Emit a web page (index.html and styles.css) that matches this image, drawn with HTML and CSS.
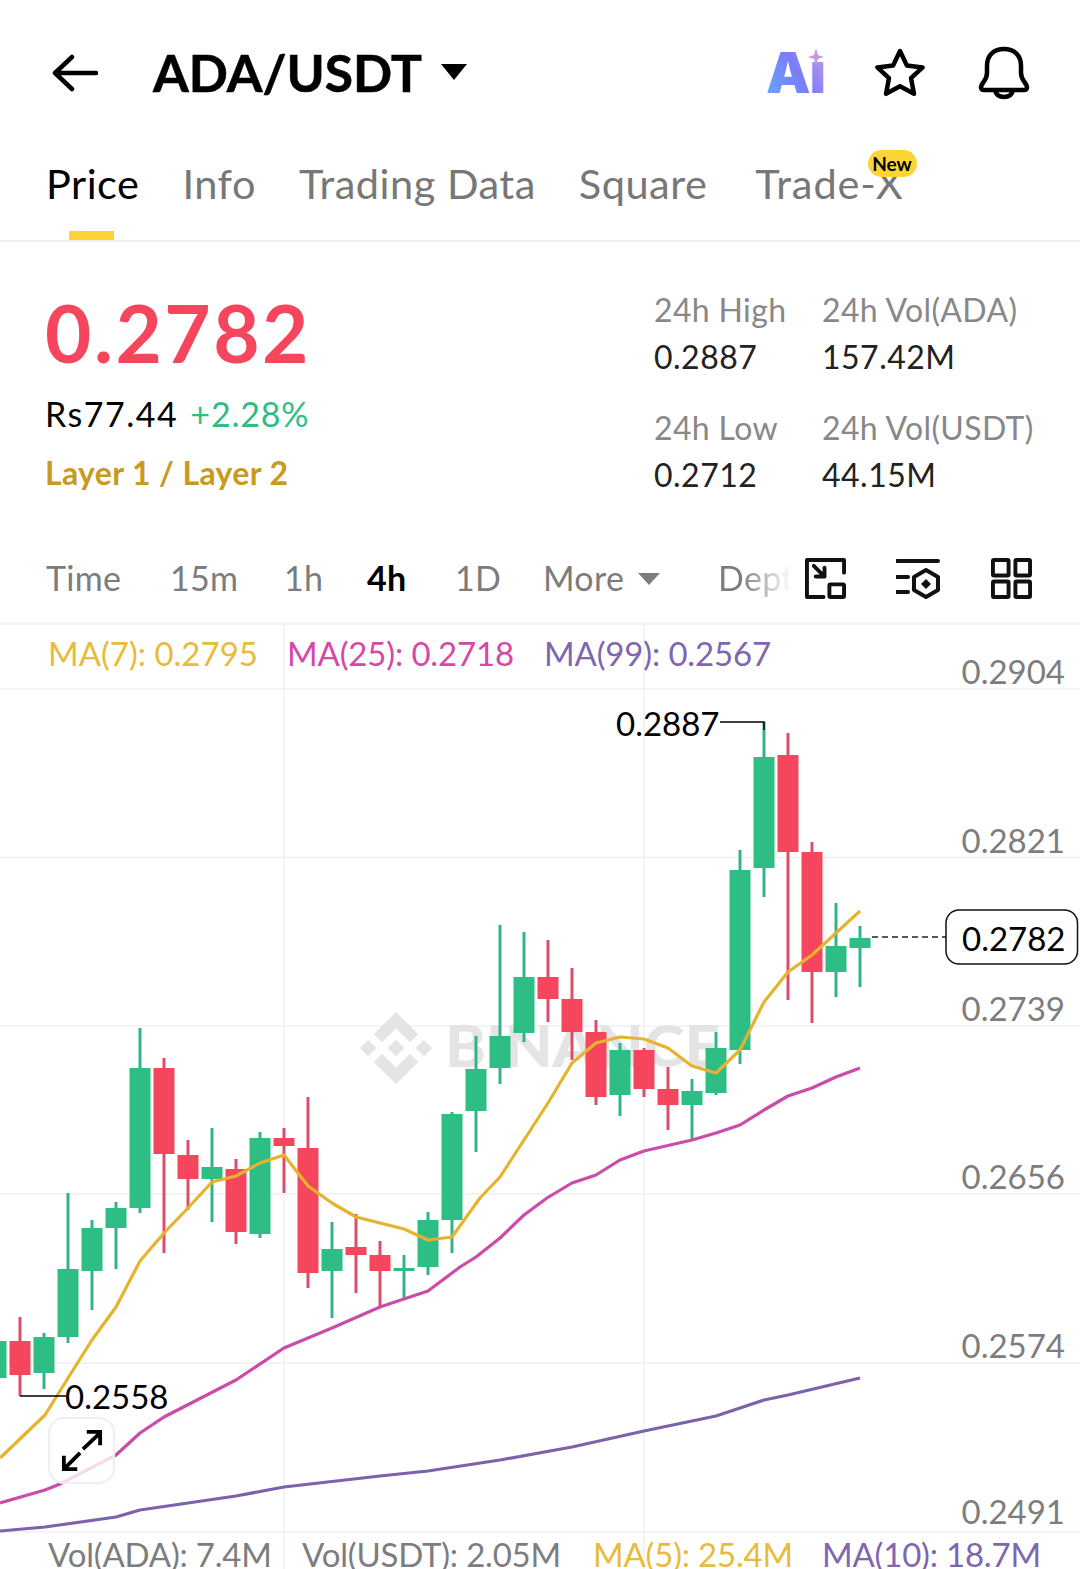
FILE: index.html
```html
<!DOCTYPE html>
<html>
<head>
	<meta charset="utf-8">
	<title>ADA/USDT</title>
	<link rel="stylesheet" href="styles.css">
</head>
<body>
<div id="page">

	<!-- top bar -->
	<div class="head">
		<svg class="back" width="46" height="38" viewBox="0 0 46 38"><path d="M20 3 L3 19 L20 35 M3 19 H44"/></svg>
		<h1>ADA/USDT</h1>
		<span class="caret"></span>
		<div class="headIcons">
			<div class="ai">
				<span class="aiTxt">Aı</span>
				<svg class="spark" width="16" height="18" viewBox="0 0 16 18"><path d="M8 0 L10 7 L16 9 L10 11 L8 18 L6 11 L0 9 L6 7 Z"/></svg>
			</div>
			<svg class="line star" width="52" height="50" viewBox="0 0 52 50"><path d="M26 3 L32.8 17.4 L48.6 19.4 L37 30.2 L40 45.8 L26 38.2 L12 45.8 L15 30.2 L3.4 19.4 L19.2 17.4 Z"/></svg>
			<svg class="line bell" width="52" height="54" viewBox="0 0 52 54"><path d="M3 41 C3 37 9 35 9 27 V20 C9 9 16 3 26 3 C36 3 43 9 43 20 V27 C43 35 49 37 49 41 C49 43 48 44 46 44 H6 C4 44 3 43 3 41 Z M17 44 C18 49 22 51 26 51 C30 51 34 49 35 44"/></svg>
		</div>
	</div>

	<!-- tabs -->
	<div class="tabs">
		<a class="on">Price</a>
		<a>Info</a>
		<a>Trading Data</a>
		<a>Square</a>
		<a class="tabX">Trade-X<b class="newTag">New</b></a>
	</div>

	<!-- price summary -->
	<div class="summary">
		<div class="left">
			<div class="bigPrice">0.2782</div>
			<p class="rate">Rs77.44 <span>+2.28%</span></p>
			<p class="layer">Layer 1 / Layer 2</p>
		</div>
		<div class="stats">
			<div><span>24h High</span><b>0.2887</b></div>
			<div><span>24h Vol(ADA)</span><b>157.42M</b></div>
			<div><span>24h Low</span><b>0.2712</b></div>
			<div><span>24h Vol(USDT)</span><b>44.15M</b></div>
		</div>
	</div>

	<!-- time range bar -->
	<div class="range">
		<a class="r1">Time</a>
		<a class="r2">15m</a>
		<a class="r3">1h</a>
		<a class="r4 on">4h</a>
		<a class="r5">1D</a>
		<a class="r6">More<i class="caret2"></i></a>
		<a class="depth">Depth</a>
		<svg class="tool t1" width="41" height="41" viewBox="0 0 42 42"><path d="M2 21 V40 H19 M2 21 V2 H40 V15"/><rect x="25" y="27" width="15" height="13" rx="1"/><path d="M9 8 L20 19 M20 10 V19 H11"/></svg>
		<svg class="tool t2" width="44" height="42" viewBox="0 0 44 42"><path d="M1 4 H42 M1 20 H12 M1 35 H12"/><path d="M30 13 L42 20 V33 L30 40 L18 33 V20 Z"/><path class="fill" d="M30 22 L35 27 L30 32 L25 27 Z"/></svg>
		<svg class="tool t3" width="41" height="41" viewBox="0 0 42 42"><rect x="2" y="2" width="16" height="16" rx="1"/><rect x="25" y="2" width="15" height="16" rx="1"/><rect x="2" y="24" width="16" height="16" rx="1"/><rect x="25" y="24" width="15" height="16" rx="1"/></svg>
	</div>

	<!-- chart -->
	<div class="chart">
		<svg class="plot" width="1080" height="944" viewBox="0 625 1080 944">
			<path class="grid" d="M0 689H1080M0 857.500H1080M0 1026H1080M0 1194H1080M0 1363H1080M0 1532H1080M284 625V1569M644 625V1569"/>

			<!-- watermark -->
			<g class="mark">
				<path transform="translate(360 1012) scale(.569)" d="M38.73 53.2l24.59-24.58 24.6 24.6 14.3-14.31L63.32 0 24.42 38.9zM0 63.31L14.3 49l14.31 14.31-14.31 14.3zM38.73 73.41l24.59 24.59 24.6-24.6 14.31 14.29-38.9 38.91-38.91-38.88-.02-.02zM98.01 63.31L112.32 49l14.3 14.31-14.3 14.3zM77.83 63.31L63.32 48.8 52.59 59.53l-1.24 1.23-2.54 2.55 14.51 14.5 14.51-14.5z"/>
				<text x="445" y="1067" textLength="275" lengthAdjust="spacingAndGlyphs">BINANCE</text>
			</g>

			<!-- candles -->
			<path class="wickG" d="M44 1333V1389M68 1193V1343M92 1220V1310M116 1202V1269M140 1028V1213M212 1128V1222M260 1132V1238M332 1222V1318M404 1255V1300M428 1212V1275M452 1112V1253M476 1036V1152M500 925V1084M524 932V1042M620 1043V1116M692 1079V1141M716 1032V1095M740 850V1064M764 722V897M836 903V997M860 926V987"/>
			<path class="wickR" d="M20 1317V1396M164 1058V1253M188 1140V1210M236 1159V1244M284 1128V1193M308 1097V1288M356 1214V1293M380 1241V1307M548 940V1022M572 968V1060M596 1020V1105M644 1048V1097M668 1067V1130M788 733V1000M812 842V1023"/>
			<path class="bodyG" d="M-14.5 1341h21v37h-21zM33.5 1337h21v36h-21zM57.5 1269h21v68h-21zM81.5 1228h21v43h-21zM105.5 1208h21v20h-21zM129.5 1068h21v140h-21zM201.5 1167h21v12h-21zM249.5 1138h21v96h-21zM321.5 1249h21v22h-21zM393.5 1268h21v3h-21zM417.5 1220h21v47h-21zM441.5 1114h21v106h-21zM465.5 1069h21v42h-21zM489.5 1036h21v32h-21zM513.5 977h21v56h-21zM609.5 1050h21v45h-21zM681.5 1091h21v14h-21zM705.5 1048h21v45h-21zM729.5 870h21v180h-21zM753.5 757h21v111h-21zM825.5 946h21v26h-21zM849.5 938h21v10h-21z"/>
			<path class="bodyR" d="M9.5 1341h21v34h-21zM153.5 1068h21v86h-21zM177.5 1155h21v24h-21zM225.5 1169h21v63h-21zM273.5 1138h21v8h-21zM297.5 1148h21v125h-21zM345.5 1247h21v8h-21zM369.5 1255h21v16h-21zM537.5 977h21v22h-21zM561.5 999h21v33h-21zM585.5 1032h21v65h-21zM633.5 1050h21v39h-21zM657.5 1089h21v16h-21zM777.5 755h21v97h-21zM801.5 852h21v120h-21z"/>

			<!-- moving averages -->
			<polyline class="ma7" points="0,1458 45,1415 68,1378 92,1340 116,1307 140,1261 164,1233 188,1208 212,1182 236,1176 260,1163 284,1155 308,1186 332,1203 356,1217 380,1223 404,1229 428,1240 452,1237 480,1198 500,1177 524,1140 548,1103 572,1063 596,1043 620,1037 644,1039 668,1048 692,1066 716,1073 740,1050 764,1002 788,972 812,955 836,933 860,911"/>
			<polyline class="ma25" points="0,1503 45,1490 60,1484 116,1455 140,1433 164,1417 236,1380 284,1348 332,1328 380,1307 428,1291 460,1267 476,1257 500,1238 524,1215 547,1198 572,1183 596,1175 620,1160 644,1151 692,1140 716,1133 740,1125 764,1110 788,1096 812,1088 836,1077 860,1068"/>
			<polyline class="ma99" points="0,1531 45,1527 116,1517 140,1510 236,1496 284,1487 380,1476 428,1471 500,1460 572,1447 644,1431 716,1416 764,1400 788,1395 860,1378"/>

			<!-- axis -->
			<text class="axis" x="1065" y="684">0.2904</text>
			<text class="axis" x="1065" y="853">0.2821</text>
			<text class="axis" x="1065" y="1021">0.2739</text>
			<text class="axis" x="1065" y="1189">0.2656</text>
			<text class="axis" x="1065" y="1358">0.2574</text>
			<text class="axis" x="1065" y="1524">0.2491</text>

			<!-- high, low, last -->
			<path class="note" d="M720 722H764V730M20 1396H66"/>
			<text class="tip" x="616" y="736">0.2887</text>
			<text class="tip" x="65" y="1409">0.2558</text>
			<path class="dash" d="M872 937H946"/>
			<rect class="lastBox" x="946" y="910" width="131.500" height="54" rx="13"/>
			<text class="tip" x="962" y="951">0.2782</text>
		</svg>

		<div class="legend">
			<span class="c7 s1">MA(7): 0.2795</span>
			<span class="c25 s2">MA(25): 0.2718</span>
			<span class="c99">MA(99): 0.2567</span>
		</div>

		<div class="expand">
			<svg width="42" height="42" viewBox="0 0 44 44"><path d="M23 20 L41 3 M27 2 H41 V16 M20 24 L3 41 M3 27 V41 H17"/></svg>
		</div>

		<div class="vols">
			<span class="grey v1">Vol(ADA): 7.4M</span>
			<span class="grey v2">Vol(USDT): 2.05M</span>
			<span class="c7 v3">MA(5): 25.4M</span>
			<span class="c99">MA(10): 18.7M</span>
		</div>
	</div>

</div>
</body>
</html>
```

FILE: styles.css
```css
* { margin:0px; padding:0px; box-sizing:border-box; }
html, body { background:#fff; }
body { font-family:"Lato", "Open Sans", sans-serif; color:#000; }
#page { width:1080px; height:1569px; overflow:hidden; }

/* top bar */
.head { height:146px; display:flex; align-items:center; padding-left:52px; }
.back { fill:none; stroke:#000; stroke-width:4.500; stroke-linecap:round; stroke-linejoin:round; }
.head h1 { font-size:51.500px; font-weight:700; margin-left:55px; line-height:1; -webkit-text-stroke:.6px #000; }
.caret { width:0; height:0; margin-left:19px; margin-bottom:2px; border-left:13px solid transparent; border-right:13px solid transparent; border-top:16px solid #000; }
.headIcons { margin-left:auto; display:flex; align-items:center; padding-right:50px; }
.line { fill:none; stroke:#000; stroke-width:4.500; stroke-linejoin:round; stroke-linecap:round; }
.star { margin-left:50px; }
.bell { margin-left:52px; }
.ai { position:relative; width:58px; height:50px; }
.aiTxt { display:block; font-family:"Inter", "Lato", sans-serif; font-size:56px; line-height:50px; font-weight:900; letter-spacing:-1px; background:linear-gradient(60deg, #62a8ff 0%, #7b7cf8 55%, #c59be8 100%); -webkit-background-clip:text; background-clip:text; color:transparent; }
.spark { position:absolute; right:0px; top:0px; fill:#c79be0; }

/* tabs */
.tabs { height:96px; display:flex; gap:43px; padding:14px 0 0 46px; border-bottom:2px solid #eeeeee; }
.tabs a { position:relative; font-size:41.500px; line-height:46px; letter-spacing:.5px; color:#777; height:80px; }
.tabs a.on { color:#000; }
.tabs a.on:after { content:""; position:absolute; left:23px; bottom:0px; width:45px; height:9px; background:#fcd535; }
.tabs a.tabX { margin-left:5px; letter-spacing:.9px; }
.newTag { position:absolute; right:-13px; top:-10px; width:49px; height:27px; border-radius:14px; background:#fcd535; color:#000; font-size:19px; line-height:27px; font-weight:700; letter-spacing:0; text-align:center; }

/* price summary */
.summary { height:288px; display:flex; padding-left:45px; }
.left { width:609px; }
.bigPrice { font-size:80px; line-height:90px; font-weight:700; letter-spacing:2.500px; color:#f6465d; margin-top:45px; }
.rate { font-size:34px; line-height:44px; letter-spacing:1.500px; margin-top:15px; }
.rate span { color:#2ebd85; margin-left:2px; letter-spacing:.8px; }
.layer { font-size:32px; line-height:40px; font-weight:700; letter-spacing:.35px; color:#c99a22; margin-top:17px; }
.stats { display:grid; grid-template-columns:168px auto; grid-auto-rows:118px; padding-top:46px; }
.stats span { display:block; font-size:32px; line-height:44px; letter-spacing:.35px; color:#888; }
.stats b { display:block; font-size:32px; line-height:46px; margin-top:2px; font-weight:400; color:#222; letter-spacing:.5px; }

/* time range bar */
.range { height:95px; display:flex; align-items:center; padding:4px 0 0 46px; border-bottom:3px solid #f4f4f4; font-size:34px; letter-spacing:.3px; color:#7c7c7c; }
.range a { display:block; line-height:40px; }
.range a.on { color:#000; font-weight:700; }
.r1 { width:124px; }
.r2 { width:114px; }
.r3 { width:83px; }
.r4 { width:88px; }
.r5 { width:88px; }
.r6 { width:175px; }
.caret2 { display:inline-block; width:0; height:0; margin-left:14px; margin-bottom:6px; border-left:11px solid transparent; border-right:11px solid transparent; border-top:12px solid #7c7c7c; }
.depth { width:74px; overflow:hidden; white-space:nowrap; background:linear-gradient(90deg, #7c7c7c 30%, #ffffff 100%); -webkit-background-clip:text; background-clip:text; color:transparent; }
.tool { fill:none; stroke:#111; stroke-width:4; stroke-linejoin:round; stroke-linecap:round; }
.tool .fill { fill:#111; stroke:none; }
.t1 { margin-left:13px; }
.t2 { margin-left:50px; }
.t3 { margin-left:51px; }

/* chart */
.chart { position:relative; height:944px; }
.plot { display:block; }
.grid { fill:none; stroke:#efefef; stroke-width:1.500; }
.mark { fill:#e4e4e4; }
.mark text { font-size:58px; font-weight:900; }
.wickG { fill:none; stroke:#34b38b; stroke-width:3; }
.wickR { fill:none; stroke:#dc4f6c; stroke-width:3; }
.bodyG { fill:#2ebd85; }
.bodyR { fill:#f6465d; }
.ma7, .ma25, .ma99 { fill:none; stroke-width:3.200; stroke-linejoin:round; }
.ma7 { stroke:#e6b32e; }
.ma25 { stroke:#cb4ba9; }
.ma99 { stroke:#7c62aa; }
.axis { font-size:33px; fill:#7d7d7d; text-anchor:end; }
.tip { font-size:33px; fill:#000; }
.note { fill:none; stroke:#000; stroke-width:1.500; }
.dash { fill:none; stroke:#222; stroke-width:1.500; stroke-dasharray:6 4; }
.lastBox { fill:#fff; stroke:#111; stroke-width:1.500; }

.legend { position:absolute; left:48px; top:8px; display:flex; font-size:33px; line-height:40px; letter-spacing:-.15px; white-space:nowrap; }
.vols { position:absolute; left:48px; bottom:-2px; display:flex; font-size:33px; line-height:34px; letter-spacing:-.2px; white-space:nowrap; }
.c7 { color:#e8bb3c; }
.c25 { color:#d548a8; }
.c99 { color:#7f66ae; }
.grey { color:#7d7d7d; }
.s1 { width:239px; letter-spacing:0; }
.s2 { width:257px; }
.v1 { width:254px; }
.v2 { width:291px; }
.v3 { width:229px; }

.expand { position:absolute; left:48px; top:792px; width:67px; height:67px; display:flex; align-items:center; justify-content:center; border:2px solid #efefef; border-radius:16px; background:rgba(255,255,255,0.8); }
.expand svg { fill:none; stroke:#000; stroke-width:4; }
```
